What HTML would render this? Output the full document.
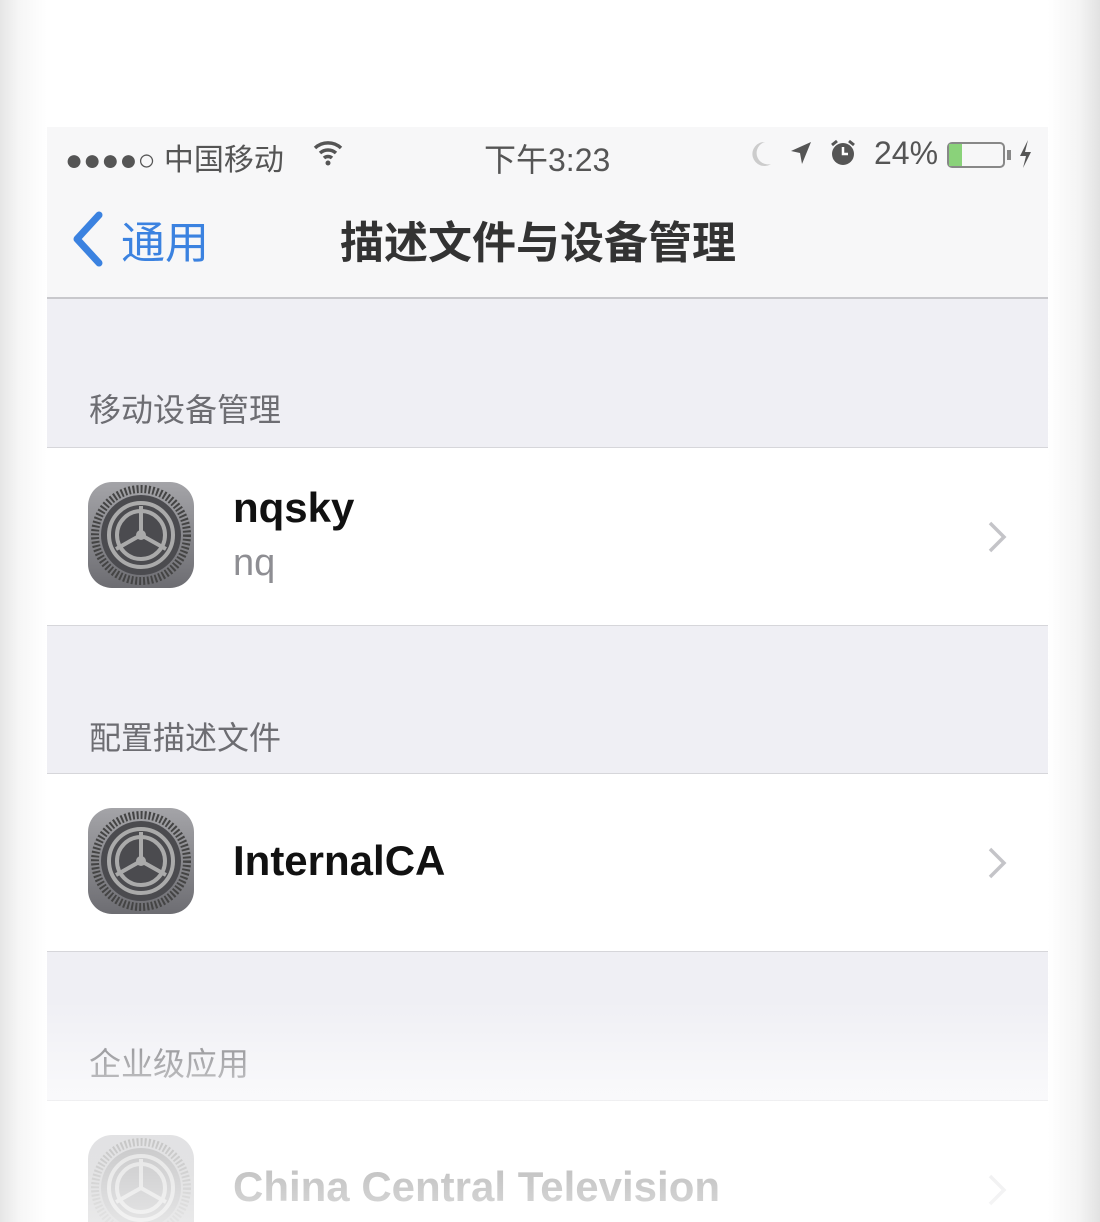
<!DOCTYPE html>
<html style="width:1100px;height:1222px;overflow:hidden"><head><meta charset="utf-8"><style>
*{margin:0;padding:0;box-sizing:border-box}
body{width:1100px;height:1222px;overflow:hidden;background:#fff;font-family:"Liberation Sans","Noto Sans CJK SC",sans-serif;position:relative}
.edgeL{position:absolute;left:0;top:0;width:47px;height:1222px;background:linear-gradient(90deg,#e6e6e6,#f6f6f6 40%,#fff)}
.edgeR{position:absolute;right:0;top:0;width:52px;height:1222px;background:linear-gradient(270deg,#e2e2e2,#f4f4f4 40%,#fff)}
.scr{position:absolute;left:47px;top:127px;width:1001px;height:1095px;background:#efeff4;overflow:hidden}
.bar{position:absolute;left:0;top:0;width:1001px;height:172px;background:#f7f7f8;border-bottom:2px solid #c8c8cc}
.t{position:absolute;white-space:nowrap}
.sec{position:absolute;left:0;width:1001px;background:#fff;border-top:1px solid #d6d6da;border-bottom:1px solid #d6d6da}
.hd{position:absolute;left:42px;font-size:32px;color:#6d6d72}
.icon{position:absolute;left:41px;width:106px;height:106px;border-radius:24px;background:linear-gradient(#a4a4a8,#6d6d72);overflow:hidden}
.chev{position:absolute;left:940px;width:20px;height:34px}
</style></head><body>
<div class="edgeL"></div><div class="edgeR"></div>
<div class="scr">
 <div class="bar">
  <div class="t" style="left:18px;top:8px;font-size:30px;color:#555">●●●●○ 中国移动</div>
  <svg class="t" style="left:265px;top:12px" width="32" height="28" viewBox="0 0 32 28"><path d="M3 9a19 19 0 0 1 26 0M8 14a12 12 0 0 1 16 0M12 19a6 6 0 0 1 8 0" stroke="#555" stroke-width="3.5" fill="none"/><circle cx="16" cy="24" r="2.5" fill="#555"/></svg>
  <div class="t" style="left:437px;top:8px;font-size:32px;color:#555">下午3:23</div>
  <svg class="t" style="left:702px;top:13px" width="24" height="28" viewBox="0 0 24 28"><path d="M16 2a12 12 0 1 0 6 22A11 11 0 0 1 16 2z" fill="#ccc"/></svg>
  <svg class="t" style="left:742px;top:13px" width="24" height="26" viewBox="0 0 24 26"><path d="M22 2L2 11l9 2 2 11z" fill="#555"/></svg>
  <svg class="t" style="left:782px;top:12px" width="28" height="28" viewBox="0 0 28 28"><circle cx="14" cy="15" r="11" fill="#555"/><path d="M14 8v7h5" stroke="#fff" stroke-width="2.5" fill="none"/><path d="M3 6l5-4M25 6l-5-4" stroke="#555" stroke-width="3"/></svg>
  <div class="t" style="left:827px;top:8px;font-size:32px;color:#555">24%</div>
  <div class="t" style="left:900px;top:15px;width:58px;height:26px;border:2px solid #888;border-radius:5px;"><div style="width:13px;height:100%;background:#8ad27a"></div></div>
  <div class="t" style="left:960px;top:23px;width:4px;height:10px;background:#888"></div>
  <svg class="t" style="left:970px;top:12px" width="16" height="30" viewBox="0 0 16 30"><path d="M11 1L3 17h6l-3 12 8-16H8z" fill="#555"/></svg>
  <svg class="t" style="left:22px;top:84px" width="36" height="56" viewBox="0 0 36 56"><path d="M30 4L8 28l22 24" stroke="#3b82e0" stroke-width="7" fill="none" stroke-linecap="round" stroke-linejoin="round"/></svg>
  <div class="t" style="left:74px;top:80px;font-size:44px;color:#3b82e0">通用</div>
  <div class="t" style="left:293px;top:80px;font-size:44px;font-weight:bold;color:#333">描述文件与设备管理</div>
 </div>
 <div class="hd t" style="top:258px">移动设备管理</div>
 <div class="sec" style="top:320px;height:179px">
  <div class="icon" style="top:34px"><svg width="106" height="106" viewBox="0 0 106 106"><circle cx="53" cy="53" r="46" fill="none" stroke="#444" stroke-width="8" stroke-dasharray="2 2"/><circle cx="53" cy="53" r="40" fill="#4b4b4f"/><circle cx="53" cy="53" r="32" fill="none" stroke="#aaa" stroke-width="4"/><circle cx="53" cy="53" r="24" fill="none" stroke="#aaa" stroke-width="4"/><path d="M53 53V24M53 53l25 14M53 53L28 67" stroke="#aaa" stroke-width="4"/><circle cx="53" cy="53" r="5" fill="#aaa"/></svg></div>
  <div class="t" style="left:186px;top:36px;font-size:42px;font-weight:bold;color:#111">nqsky</div>
  <div class="t" style="left:186px;top:94px;font-size:38px;color:#8e8e93">nq</div>
  <svg class="chev" style="top:72px" viewBox="0 0 20 34"><path d="M3 3l14 14L3 31" stroke="#c4c4c8" stroke-width="3.5" fill="none"/></svg>
 </div>
 <div class="hd t" style="top:586px">配置描述文件</div>
 <div class="sec" style="top:646px;height:179px">
  <div class="icon" style="top:34px"><svg width="106" height="106" viewBox="0 0 106 106"><circle cx="53" cy="53" r="46" fill="none" stroke="#444" stroke-width="8" stroke-dasharray="2 2"/><circle cx="53" cy="53" r="40" fill="#4b4b4f"/><circle cx="53" cy="53" r="32" fill="none" stroke="#aaa" stroke-width="4"/><circle cx="53" cy="53" r="24" fill="none" stroke="#aaa" stroke-width="4"/><path d="M53 53V24M53 53l25 14M53 53L28 67" stroke="#aaa" stroke-width="4"/><circle cx="53" cy="53" r="5" fill="#aaa"/></svg></div>
  <div class="t" style="left:186px;top:63px;font-size:42px;font-weight:bold;color:#111">InternalCA</div>
  <svg class="chev" style="top:72px" viewBox="0 0 20 34"><path d="M3 3l14 14L3 31" stroke="#c4c4c8" stroke-width="3.5" fill="none"/></svg>
 </div>
 <div class="hd t" style="top:912px">企业级应用</div>
 <div class="sec" style="top:973px;height:122px;border-bottom:none">
  <div class="icon" style="top:34px;height:88px;border-radius:24px 24px 0 0"><svg width="106" height="106" viewBox="0 0 106 106"><circle cx="53" cy="53" r="46" fill="none" stroke="#444" stroke-width="8" stroke-dasharray="2 2"/><circle cx="53" cy="53" r="40" fill="#4b4b4f"/><circle cx="53" cy="53" r="32" fill="none" stroke="#aaa" stroke-width="4"/><circle cx="53" cy="53" r="24" fill="none" stroke="#aaa" stroke-width="4"/><path d="M53 53V24M53 53l25 14M53 53L28 67" stroke="#aaa" stroke-width="4"/></svg></div>
  <div class="t" style="left:186px;top:62px;font-size:42px;font-weight:bold;color:#111">China Central Television</div>
  <svg class="chev" style="top:72px" viewBox="0 0 20 34"><path d="M3 3l14 14L3 31" stroke="#c4c4c8" stroke-width="3.5" fill="none"/></svg>
 </div>
 <div style="position:absolute;left:0;top:873px;width:1001px;height:222px;background:linear-gradient(rgba(255,255,255,0),rgba(255,255,255,0.6) 40%,rgba(255,255,255,0.85))"></div>
</div>
</body></html>
